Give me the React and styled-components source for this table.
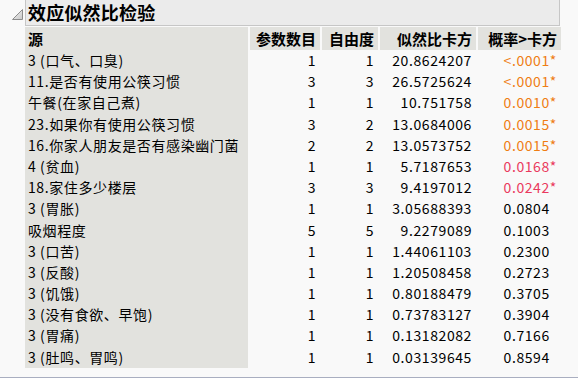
import styled, { createGlobalStyle } from "styled-components";

const GlobalStyle = createGlobalStyle`
  html, body {
    margin: 0;
    padding: 0;
    background: #f9f9f9;
  }
  body {
    font-family: "Noto Sans CJK SC", "Liberation Sans", sans-serif;
    color: #000;
  }
`;

const Page = styled.div`
  width: 578px;
  height: 378px;
  box-sizing: border-box;
  border-bottom: 1px solid #a9aec0;
  overflow: hidden;
`;

const TitleRow = styled.div`
  display: flex;
  align-items: stretch;
`;

const Toggle = styled.div`
  width: 25px;
  display: flex;
  align-items: flex-start;
  justify-content: flex-end;
  padding-top: 9px;
  box-sizing: border-box;
  padding-right: 2px;
`;

const TitleBar = styled.div`
  width: 535px;
  height: 26px;
  box-sizing: border-box;
  background: #ebebeb;
  border-left: 1px solid #c6c6c6;
  border-right: 1px solid #c6c6c6;
  border-bottom: 1px solid #c6c6c6;
  padding-left: 2px;
  font-size: 18px;
  font-weight: 700;
  line-height: 25px;
  letter-spacing: 0.2px;
`;

const Table = styled.div`
  margin-left: 25px;
  margin-top: 1px;
  display: grid;
  grid-template-columns: 223px 70px 56px 96px 83px;
  column-gap: 2px;
  grid-auto-rows: 21.2px;
  grid-template-rows: 23px;
`;

const Head = styled.div`
  background: #e2e2de;
  font-size: 15px;
  font-weight: 700;
  line-height: 23px;
  text-align: ${(p) => (p.$left ? "left" : "right")};
  padding: 0 4px 0 3px;
  white-space: nowrap;
`;

const Source = styled.div`
  background: #e2e2de;
  font-size: 14px;
  letter-spacing: 0.6px;
  line-height: 21px;
  padding-left: 3px;
  white-space: nowrap;
  overflow: hidden;
`;

const Num = styled.div`
  font-size: 14px;
  letter-spacing: 0.6px;
  line-height: 21px;
  text-align: right;
  padding-right: 4px;
  white-space: nowrap;
`;

const Prob = styled(Num)`
  color: ${(p) => p.$color || "#000"};
`;

const Star = styled.span`
  visibility: ${(p) => (p.$show ? "visible" : "hidden")};
`;

const orange = "#ef7d14";
const red = "#ea3a5e";

const rows = [
  ["3 (口气、口臭)", 1, 1, "20.8624207", "<.0001", orange],
  ["11.是否有使用公筷习惯", 3, 3, "26.5725624", "<.0001", orange],
  ["午餐(在家自己煮)", 1, 1, "10.751758", "0.0010", orange],
  ["23.如果你有使用公筷习惯", 3, 2, "13.0684006", "0.0015", orange],
  ["16.你家人朋友是否有感染幽门菌", 2, 2, "13.0573752", "0.0015", orange],
  ["4 (贫血)", 1, 1, "5.7187653", "0.0168", red],
  ["18.家住多少楼层", 3, 3, "9.4197012", "0.0242", red],
  ["3 (胃胀)", 1, 1, "3.05688393", "0.0804"],
  ["吸烟程度", 5, 5, "9.2279089", "0.1003"],
  ["3 (口苦)", 1, 1, "1.44061103", "0.2300"],
  ["3 (反酸)", 1, 1, "1.20508458", "0.2723"],
  ["3 (饥饿)", 1, 1, "0.80188479", "0.3705"],
  ["3 (没有食欲、早饱)", 1, 1, "0.73783127", "0.3904"],
  ["3 (胃痛)", 1, 1, "0.13182082", "0.7166"],
  ["3 (肚鸣、胃鸣)", 1, 1, "0.03139645", "0.8594"],
];

export default function App() {
  return (
    <Page>
      <GlobalStyle />
      <TitleRow>
        <Toggle>
          <svg width="11" height="11" viewBox="0 0 11 11">
            <defs>
              <linearGradient id="tri" x1="0" y1="0" x2="1" y2="1">
                <stop offset="0" stopColor="#f4f4f4" />
                <stop offset="1" stopColor="#c9c9c9" />
              </linearGradient>
            </defs>
            <polygon points="10.5,0.5 10.5,10.5 0.5,10.5" fill="url(#tri)" stroke="#8c8c8c" strokeWidth="1" />
          </svg>
        </Toggle>
        <TitleBar>效应似然比检验</TitleBar>
      </TitleRow>
      <Table>
        <Head $left>源</Head>
        <Head>参数数目</Head>
        <Head>自由度</Head>
        <Head>似然比卡方</Head>
        <Head>概率&gt;卡方</Head>
        {rows.map(([src, n, df, chi, p, color]) => (
          <>
            <Source key={src + "s"}>{src}</Source>
            <Num key={src + "n"}>{n}</Num>
            <Num key={src + "d"}>{df}</Num>
            <Num key={src + "c"}>{chi}</Num>
            <Prob key={src + "p"} $color={color}>
              {p}
              <Star $show={!!color}>*</Star>
            </Prob>
          </>
        ))}
      </Table>
    </Page>
  );
}
